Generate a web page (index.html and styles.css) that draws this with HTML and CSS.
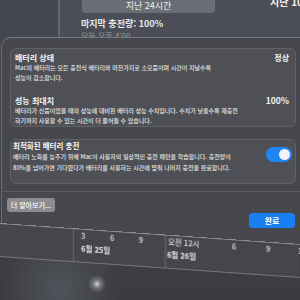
FILE: index.html
```html
<!DOCTYPE html>
<html lang="ko">
<head>
<meta charset="utf-8">
<title>배터리 상태</title>
<link rel="stylesheet" href="styles.css">
</head>
<body>
<div class="screen">
  <header class="top">
    <div class="strip"></div>
    <div class="win">
      <div class="seg-row">
        <div class="seg">지난 24시간</div>
        <div class="seg-alt">지난 10일</div>
      </div>
      <div class="last">마지막 충전량: 100%</div>
      <div class="today">오늘 오후 4:00</div>
    </div>
  </header>

  <section class="sheet">
    <div class="group g1">
      <div class="item">
        <div class="item-head"><span class="title">배터리 상태</span><span class="value">정상</span></div>
        <p class="desc">Mac의 배터리는 모든 충전식 배터리와 마찬가지로 소모품이며 시간이 지날수록<br>성능이 감소합니다.</p>
      </div>
      <div class="item">
        <div class="item-head"><span class="title">성능 최대치</span><span class="value pct">100%</span></div>
        <p class="desc">배터리가 신품이었을 때의 성능에 대비한 배터리 성능 수치입니다. 수치가 낮을수록 재충전<br>하기까지 사용할 수 있는 시간이 더 줄어들 수 있습니다.</p>
      </div>
    </div>

    <div class="group g2">
      <div class="g2-text">
        <div class="title t2">최적화된 배터리 충전</div>
        <p class="desc d2">배터리 노화를 늦추기 위해 Mac이 사용자의 일상적인 충전 패턴을 학습합니다. 충전량이<br>80%를 넘어가면 기다렸다가 배터리를 사용하는 시간에 맞춰 나머지 충전을 완료합니다.</p>
      </div>
      <div class="toggle"><span class="knob"></span></div>
    </div>

    <div class="sep"></div>

    <div class="actions">
      <button class="btn more">더 알아보기...</button>
      <button class="btn done">완료</button>
    </div>
  </section>

  <section class="chart">
    <div class="day d25">
      <div class="ticks"><span class="c29">3</span><span class="c29">6</span><span class="c29">9</span></div>
      <div class="date">6월 25일</div>
    </div>
    <div class="day d26">
      <div class="ticks"><span class="c64">오전 12시</span><span class="c34">6</span><span class="c32">9</span><span>12</span></div>
      <div class="date">6월 26일</div>
    </div>
  </section>
</div>
</body>
</html>
```

FILE: styles.css
```css
* {
  box-sizing: border-box;
  margin: 0;
  padding: 0;
}

body {
  margin: 0;
  background: #3c3e44;
  font-family: "Noto Sans CJK KR", "Noto Sans", sans-serif;
  color: #eeeeee;
}

.screen {
  width: 300px;
  height: 300px;
  overflow: hidden;
  background:
    radial-gradient(circle at 97px 284px, rgba(235, 235, 240, 0.85) 0, rgba(200, 200, 208, 0.35) 4px, rgba(0, 0, 0, 0) 9px),
    radial-gradient(ellipse at 60px 290px, rgba(95, 98, 106, 0.6) 0, rgba(0, 0, 0, 0) 60px),
    linear-gradient(#47494f, #3a3c41);
}

/* background window */
.top {
  display: flex;
  height: 37px;
  overflow: hidden;
}

.strip {
  width: 60px;
  flex: none;
  background: #454850;
  border-right: 2px solid #63666d;
}

.win {
  flex: 1;
  background: #4b4e56;
  padding-left: 22px;
  overflow: hidden;
}

.seg-row {
  display: flex;
  align-items: flex-start;
  white-space: nowrap;
}

.seg {
  width: 133px;
  height: 13px;
  flex: none;
  background: #6b6e74;
  border-radius: 0 0 4px 4px;
  font-size: 9px;
  line-height: 12px;
  text-align: center;
  color: #f0f0f0;
}

.seg-alt {
  margin-left: 55px;
  margin-top: -4px;
  font-size: 10px;
  line-height: 11px;
  font-weight: 700;
  color: #f2f2f2;
}

.last {
  margin: 5px 0 0 -1px;
  font-size: 9px;
  line-height: 11px;
  font-weight: 700;
  color: #e8e8e8;
  white-space: nowrap;
}

.today {
  margin: 2px 0 0 -1px;
  font-size: 8px;
  line-height: 10px;
  color: #9a9ca0;
}

/* sheet dialog */
.sheet {
  width: 320px;
  height: 208px;
  margin-left: 1px;
  background: #46484e;
  border-top: 1px solid #76787e;
  border-left: 1px solid #6b6d73;
  border-radius: 10px 10px 0 0;
  padding: 10px 0 0 8px;
}

.group {
  width: 286px;
  background: #4e5056;
  border: 1px solid #5f6167;
  border-radius: 6px;
}

.g1 {
  height: 79px;
  padding: 3px 6px 0 4px;
}

.item + .item {
  margin-top: 12px;
}

.item-head {
  display: flex;
  justify-content: space-between;
  align-items: center;
  height: 11px;
}

.title {
  font-size: 8px;
  line-height: 11px;
  font-weight: 700;
  color: #f6f6f6;
}

.value {
  font-size: 8px;
  line-height: 11px;
  font-weight: 700;
  color: #f6f6f6;
}

.value.pct {
  font-size: 8.5px;
}

.desc {
  font-size: 6px;
  line-height: 10px;
  font-weight: 500;
  color: #e6e6e6;
  white-space: nowrap;
}

.g2 {
  margin-top: 12px;
  height: 45px;
  display: flex;
  justify-content: space-between;
  align-items: flex-start;
  padding: 1px 3px 0 2px;
}

.t2 {
  font-size: 7.5px;
  line-height: 10px;
}

.d2 {
  line-height: 11px;
}

.toggle {
  width: 26px;
  height: 15px;
  margin-top: 6px;
  border-radius: 8px;
  background: #1f86f6;
  display: flex;
  justify-content: flex-end;
  align-items: center;
  padding: 2px;
  flex: none;
}

.knob {
  width: 11px;
  height: 11px;
  border-radius: 50%;
  background: #f4f4f6;
}

.sep {
  width: 310px;
  height: 1px;
  margin: 7px 0 0 -8px;
  background: #5b5d63;
}

.actions {
  width: 286px;
  display: flex;
  justify-content: space-between;
  align-items: flex-start;
  margin-top: 6px;
}

.btn {
  border: none;
  font-family: inherit;
  color: #ffffff;
  text-align: center;
  white-space: nowrap;
}

.more {
  margin-left: -3px;
  width: 48px;
  height: 14px;
  background: #8b8c90;
  border-radius: 3px;
  font-size: 7px;
  line-height: 14px;
  font-weight: 500;
}

.done {
  margin-top: 15px;
  margin-right: 1px;
  width: 46px;
  height: 15px;
  background: #1a7ff2;
  border-radius: 4px;
  font-size: 8px;
  line-height: 15px;
  font-weight: 700;
}

/* chart axis under the sheet */
.chart {
  margin-top: -22px;
  height: 34px;
  display: flex;
  padding-left: 73px;
  background: #44464b;
  border-top: 1px solid #8a8c90;
  border-bottom: 1px solid #75777c;
  transform: skewY(4deg);
  transform-origin: 0 0;
  will-change: transform;
}

.day {
  height: 100%;
  border-left: 1px solid #6a6c71;
}

.d25 {
  width: 92px;
  flex: none;
  padding-left: 7px;
}

.d26 {
  flex: 1;
  padding-left: 2px;
}

.ticks {
  display: flex;
  height: 11px;
  font-size: 7.5px;
  line-height: 11px;
  font-weight: 500;
  color: #e2e2e2;
  white-space: nowrap;
}

.c29 { width: 29px; flex: none; }
.c64 { width: 64px; flex: none; }
.c34 { width: 34px; flex: none; }
.c32 { width: 32px; flex: none; }

.date {
  margin-top: 2px;
  font-size: 7.5px;
  line-height: 11px;
  font-weight: 700;
  color: #eeeeee;
  white-space: nowrap;
}

.d26 .date {
  margin-left: -1px;
}
```
